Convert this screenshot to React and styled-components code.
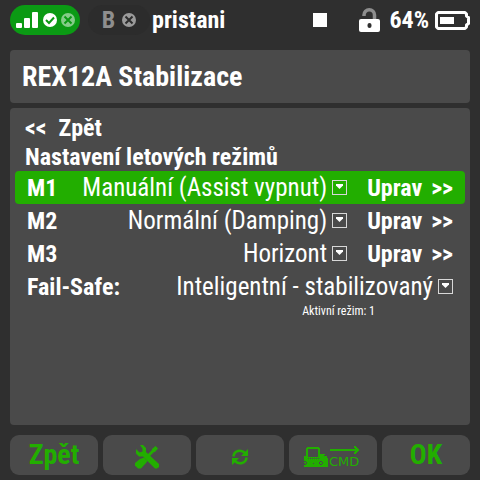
import React from "react";
import styled, { createGlobalStyle } from "styled-components";

const GlobalStyle = createGlobalStyle`
  * {
    box-sizing: border-box;
  }

  body {
    margin: 0;
    background: #2f2f2f;
    color: #ffffff;
    font-family: "Roboto Condensed", "Liberation Sans Narrow", Roboto, sans-serif;
    font-size: 24px;
    line-height: 28px;
  }

  button,
  select {
    font: inherit;
    color: inherit;
  }
`;

const Screen = styled.div`
  display: flex;
  flex-direction: column;
  min-height: 100vh;
  padding: 0 10px 5px;
`;

const StatusBar = styled.header`
  display: flex;
  align-items: center;
  height: 50px;
  padding-bottom: 10px;
  font-weight: 700;
`;

const Receiver = styled.div`
  display: flex;
  align-items: center;
  justify-content: center;
  gap: ${props => (props.$active ? 4 : 7)}px;
  width: ${props => (props.$active ? 70 : 62)}px;
  height: 30px;
  border-radius: 15px;
  background: ${props => (props.$active ? "#0b9a14" : "#2c2c2c")};
  color: ${props => (props.$active ? "#ffffff" : "#8e8e8e")};
`;

const Receivers = styled.div`
  display: flex;
  gap: 8px;
`;

const ModelName = styled.div`
  flex: 1;
  padding-left: 2px;
`;

const Indicators = styled.div`
  display: flex;
  align-items: center;
`;

const StopMark = styled.div`
  width: 14px;
  height: 14px;
  margin-right: 32px;
  background: #ffffff;
`;

const Charge = styled.span`
  margin: 0 6px 0 9px;
`;

const Panel = styled.section`
  border-radius: 4px;
  background: #4a4a4a;
`;

const TitlePanel = styled(Panel)`
  margin-bottom: 5px;
  padding: 11px 12px 10px;
`;

const Title = styled.h1`
  margin: 0;
  font-size: 28px;
  line-height: 32px;
`;

const Content = styled(Panel)`
  flex: 1;
  margin-bottom: 10px;
  padding: 6px 5px;
`;

const BackLink = styled.a`
  display: flex;
  gap: 12px;
  padding: 0 10px;
  color: inherit;
  font-weight: 700;
  text-decoration: none;
`;

const Heading = styled.h2`
  margin: 0;
  padding: 1px 10px 0;
  font-size: 24px;
`;

const Row = styled.div`
  display: flex;
  align-items: center;
  height: 33px;
  padding: 0 12px;
  border-radius: 4px;
  background: ${props => (props.$active ? "#22ae00" : "transparent")};
`;

const RowLabel = styled.label`
  font-weight: 700;
`;

const Picker = styled.div`
  display: flex;
  flex: 1;
  align-items: center;
  gap: 5px;
`;

const Select = styled.select`
  flex: 1;
  min-width: 0;
  padding: 0;
  border: none;
  outline: none;
  appearance: none;
  background: transparent;
  font-size: 25px;
  text-align-last: right;

  option {
    color: #000000;
  }
`;

const EditButton = styled.button`
  display: flex;
  gap: 9px;
  margin-left: 20px;
  padding: 0;
  border: none;
  background: none;
  font-weight: 700;
`;

const Note = styled.p`
  margin: 0;
  padding: 1px 90px 0 0;
  font-size: 12px;
  line-height: 14px;
  text-align: right;
`;

const Footer = styled.footer`
  display: grid;
  grid-template-columns: repeat(5, 1fr);
  gap: 5px;
`;

const SoftKey = styled.button`
  display: flex;
  align-items: center;
  justify-content: center;
  height: 40px;
  padding: 0;
  border: none;
  border-radius: 9px;
  background: #4a4a4a;
  color: #22ae00;
  font-size: 28px;
  font-weight: 700;
`;

const IconKey = styled(SoftKey)`
  padding-top: 4px;
`;

const SignalIcon = () => (
  <svg width="23" height="16" viewBox="0 0 23 16" fill="currentColor">
    <rect x="0" y="11" width="6" height="5" rx="1" />
    <rect x="8" y="6" width="6" height="10" rx="1" />
    <rect x="16" y="0" width="6" height="16" rx="1" />
  </svg>
);

const StateIcon = ({ ok, color, mark }) => (
  <svg width="14" height="14" viewBox="0 0 14 14">
    <circle cx="7" cy="7" r="7" fill={color} />
    <path
      d={ok ? "M3 7l3 3 5-5.500" : "M3.500 3.500l7 7M10.500 3.500l-7 7"}
      fill="none"
      stroke={mark}
      strokeWidth="2"
    />
  </svg>
);

const LockIcon = () => (
  <svg width="21" height="24" viewBox="0 0 21 24">
    <path
      d="M5 8V7a5.200 5.200 0 0 1 10.500 0v5"
      fill="none"
      stroke="#8e8e8e"
      strokeWidth="3.500"
    />
    <rect x="0" y="11" width="21" height="13" rx="2" fill="#ffffff" />
    <rect x="8.500" y="15" width="4" height="5" rx="2" fill="#2f2f2f" />
  </svg>
);

const BatteryIcon = () => (
  <svg width="35" height="19" viewBox="0 0 35 19">
    <path
      d="M3 1.500h27l1.500 1.500v2l2 1.500v6l-2 1.500v2L30 17.500H3L1.500 16V3z"
      fill="none"
      stroke="#ffffff"
      strokeWidth="3"
      strokeLinejoin="round"
    />
    <rect x="5" y="6" width="14" height="7" fill="#ffffff" />
  </svg>
);

const DropIcon = () => (
  <svg width="15" height="15" viewBox="0 0 15 15">
    <rect x="0.500" y="0.500" width="14" height="14" fill="none" stroke="#d8d8d8" />
    <path d="M4 4h7v1.500L7.500 9 4 5.500z" fill="#ffffff" />
  </svg>
);

const ToolsIcon = () => (
  <svg width="24" height="24" viewBox="0 0 24 24" fill="currentColor">
    <path d="M5 0h3l3 3v4l13 12v3l-2 1.500h-2L8 11.500H4L1 8.500V4l3.500 3.500 3-1V3.500z" />
    <path d="M20.500 1l2.500 2.500-3 3.500h-1l-5 5-2-2 5-5V4z" />
    <path d="M9 12.500l3.500 3.500-1.500 2-5 5.500H3l-3-3V18l5-4z" />
  </svg>
);

const RefreshIcon = () => (
  <svg width="16" height="16" viewBox="0 0 16 16">
    <g fill="none" stroke="currentColor" strokeWidth="2.600">
      <path d="M1.500 7.500C2 1.500 9 0 13 4" />
      <path d="M14.500 8.500C14 14.500 7 16 3 12" />
    </g>
    <path d="M16 0v7H9zM0 16V9h7z" fill="currentColor" />
  </svg>
);

const CommandIcon = () => (
  <svg width="58" height="22" viewBox="0 0 58 22">
    <g shapeRendering="crispEdges">
      <path
        fill="currentColor"
        fillRule="evenodd"
        d="M2 2h1V1h12v1h1v6h5v2h2v2h1v9H0v-3h1v-1H0v-7h2zM4 3v8h10V3z"
      />
      <path d="M4 12.500h11" stroke="#4a4a4a" strokeDasharray="1 1" />
      <path d="M20 9.500h1M9 17.500h1" stroke="#4a4a4a" />
      <path d="M16 15.500h2M16 18.500h2M15.500 16v2M18.500 16v2" stroke="#4a4a4a" />
      <path d="M0 15.500h2M2.500 16v2M0 18.500h2" stroke="#4a4a4a" />
      <path d="M26 4h28" stroke="currentColor" strokeWidth="2" />
      <path d="M50 0h2v1h1v1h1v1h1v2h-1v1h-1v1h-1v1h-2V6h1V2h-1z" fill="currentColor" />
    </g>
    <text x="25" y="20" fill="currentColor" fontFamily="DejaVu Sans" fontSize="13" fontWeight="400">
      CMD
    </text>
  </svg>
);

const modes = [
  { id: "m1", label: "M1", value: "Manuální (Assist vypnut)", editable: true },
  { id: "m2", label: "M2", value: "Normální (Damping)", editable: true },
  { id: "m3", label: "M3", value: "Horizont", editable: true },
  { id: "failsafe", label: "Fail-Safe:", value: "Inteligentní - stabilizovaný" }
];

const ModeRow = ({ mode, active, onSelect }) => (
  <Row $active={active} onClick={onSelect}>
    <RowLabel htmlFor={mode.id}>{mode.label}</RowLabel>
    <Picker>
      <Select id={mode.id} defaultValue={mode.value}>
        <option>{mode.value}</option>
      </Select>
      <DropIcon />
    </Picker>
    {mode.editable && (
      <EditButton type="button">
        <span>Uprav</span>
        <span>&gt;&gt;</span>
      </EditButton>
    )}
  </Row>
);

class App extends React.Component {
  constructor() {
    super();
    this.state = { selected: "m1" };
  }

  render() {
    return (
      <Screen>
        <GlobalStyle />
        <StatusBar>
          <Receivers>
            <Receiver $active>
              <SignalIcon />
              <StateIcon ok color="#ffffff" mark="#0b9a14" />
              <StateIcon color="#85cc89" mark="#0b9a14" />
            </Receiver>
            <Receiver>
              <span>B</span>
              <StateIcon color="#9a9a9a" mark="#2c2c2c" />
            </Receiver>
          </Receivers>
          <ModelName>pristani</ModelName>
          <Indicators>
            <StopMark />
            <LockIcon />
            <Charge>64%</Charge>
            <BatteryIcon />
          </Indicators>
        </StatusBar>

        <TitlePanel>
          <Title>REX12A Stabilizace</Title>
        </TitlePanel>

        <Content>
          <BackLink href="#back">
            <span>&lt;&lt;</span>
            <span>Zpět</span>
          </BackLink>
          <Heading>Nastavení letových režimů</Heading>
          {modes.map(mode => (
            <ModeRow
              key={mode.id}
              mode={mode}
              active={mode.id === this.state.selected}
              onSelect={() => this.setState({ selected: mode.id })}
            />
          ))}
          <Note>Aktivní režim: 1</Note>
        </Content>

        <Footer>
          <SoftKey type="button">Zpět</SoftKey>
          <IconKey type="button" aria-label="Nástroje">
            <ToolsIcon />
          </IconKey>
          <IconKey type="button" aria-label="Obnovit">
            <RefreshIcon />
          </IconKey>
          <IconKey type="button">
            <CommandIcon />
          </IconKey>
          <SoftKey type="button">OK</SoftKey>
        </Footer>
      </Screen>
    );
  }
}

export default App;
